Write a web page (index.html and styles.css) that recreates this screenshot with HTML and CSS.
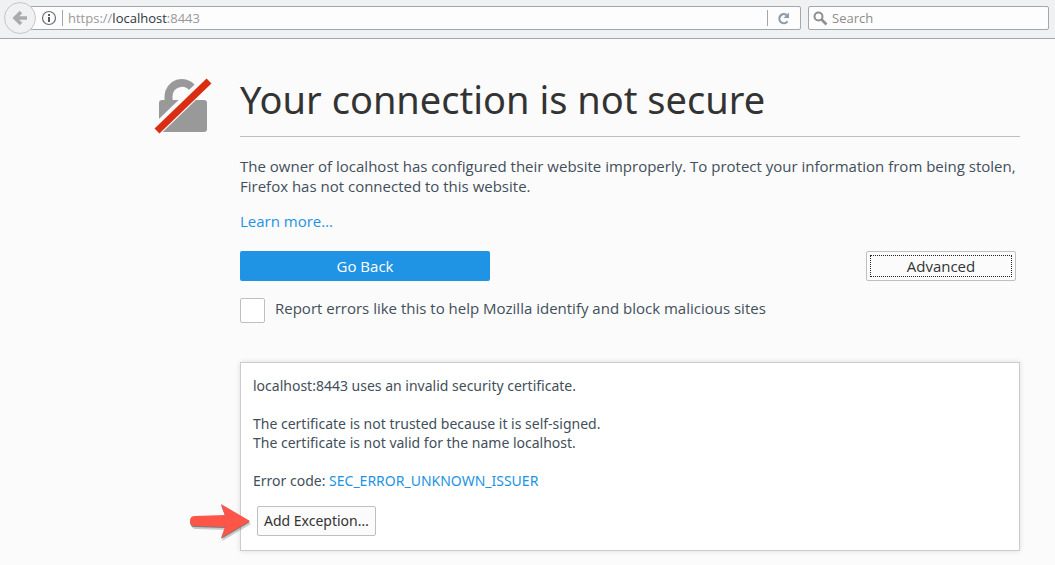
FILE: index.html
```html
<!DOCTYPE html>
<html lang="en">
<head>
<meta charset="utf-8">
<title>Insecure Connection</title>
<link rel="stylesheet" href="styles.css">
</head>
<body>
<header class="toolbar">
  <button class="back" aria-label="Back">
    <svg width="16" height="16" viewBox="0 0 16 16"><path d="M9 2 3 8l6 6M3.500 8H15" fill="none" stroke="#ababab" stroke-width="3.600"/></svg>
  </button>
  <div class="urlbar">
    <svg class="info" width="16" height="16" viewBox="0 0 16 16"><circle cx="8" cy="8" r="6.500" fill="none" stroke="#6e6e6e" stroke-width="1.200"/><path d="M7 7h2v5H7zM7 4h2v2H7z" fill="#5a5a5a"/></svg>
    <div class="address">https://<span class="host">localhost</span>:8443</div>
    <button class="reload" aria-label="Reload">
      <svg width="14" height="14" viewBox="0 0 14 14"><path d="M10.500 10.300A4.500 4.500 0 1 1 9.500 4" fill="none" stroke="#8d9bab" stroke-width="2.200"/><path d="M12 1.500v5.500H6.500z" fill="#8d9bab"/></svg>
    </button>
  </div>
  <div class="searchbar">
    <svg width="15" height="15" viewBox="0 0 15 15"><circle cx="5.500" cy="5.500" r="4" fill="none" stroke="#8f8f8f" stroke-width="2"/><path d="m8.500 8.500 5 5" stroke="#8f8f8f" stroke-width="2.600"/></svg>
    <input class="search" type="text" placeholder="Search" aria-label="Search">
  </div>
</header>
<main class="page">
  <svg class="lock" width="58" height="58" viewBox="0 0 58 58">
    <path d="M14.500 26V18a13.500 13.500 0 0 1 24-8" fill="none" stroke="#999" stroke-width="8"/>
    <rect x="5" y="22" width="48" height="32" rx="3" fill="#999"/>
    <path d="M-1 55 56 0" stroke="#fbfbfb" stroke-width="12"/>
    <path d="m3 53 52-50" stroke="#d92d14" stroke-width="7"/>
  </svg>
  <div class="content">
    <h1 class="title">Your connection is not secure</h1>
    <p class="text">The owner of localhost has configured their website improperly. To protect your information from being stolen, Firefox has not connected to this website.</p>
    <p class="more"><a href="#">Learn more…</a></p>
    <div class="actions">
      <button class="btn primary">Go Back</button>
      <button class="btn advanced">Advanced</button>
    </div>
    <div class="report">
      <input class="check" type="checkbox" id="report">
      <label for="report">Report errors like this to help Mozilla identify and block malicious sites</label>
    </div>
    <section class="panel">
      <p>localhost:8443 uses an invalid security certificate.</p>
      <p>The certificate is not trusted because it is self-signed.<br>The certificate is not valid for the name localhost.</p>
      <p>Error code: <a href="#">SEC_ERROR_UNKNOWN_ISSUER</a></p>
      <button class="btn exception">Add Exception…</button>
      <svg class="arrow" width="64" height="42" viewBox="0 0 64 42">
        <path d="M6 13 36 12 32 1 61 18 32 35 36 24 6 23Q1 23 1 18T6 13Z" fill="#555" opacity=".3" transform="translate(1 3)"/>
        <path d="M6 13 36 12 32 1 61 18 32 35 36 24 6 23Q1 23 1 18T6 13Z" fill="#666" opacity=".8" transform="translate(0 1)"/>
        <path d="M6 13 36 12 32 1 61 18 32 35 36 24 6 23Q1 23 1 18T6 13Z" fill="#fd5548"/>
      </svg>
    </section>
  </div>
</main>
</body>
</html>
```
FILE: styles.css
```css
* { box-sizing: border-box; }
body {
  margin: 0;
  background: #fbfbfb;
  color: #424f5a;
  font: 15px/20px "Open Sans", "Noto Sans", sans-serif;
}
h1, p { margin: 0; }
a { color: #1d93e3; text-decoration: none; }
button, input { font: inherit; margin: 0; padding: 0; }
svg { display: block; flex: none; }

.toolbar {
  display: flex;
  align-items: center;
  padding: 2px 6px 4px 4px;
  border-bottom: 1px solid #a0a8ae;
  background: #f0f1f3;
  font-size: 13px;
}
.back {
  display: flex;
  align-items: center;
  justify-content: center;
  flex: none;
  width: 32px;
  height: 32px;
  border: 1px solid #c4c6c8;
  border-radius: 50%;
  background: #f0f1f3;
  z-index: 1;
}
.urlbar, .searchbar {
  display: flex;
  align-items: center;
  height: 24px;
  border: 1px solid #a0a8ae;
  border-radius: 2px;
  background: #fdfdfd;
}
.urlbar {
  flex: 1;
  margin-left: -6px;
  padding-left: 10px;
}
.address {
  flex: 1;
  height: 16px;
  margin-left: 5px;
  padding-left: 5px;
  border-left: 1px solid #a0a8ae;
  line-height: 16px;
  color: #999;
}
.host { color: #2e3640; }
.reload {
  display: flex;
  align-items: center;
  height: 16px;
  padding: 0 9px;
  border: 0;
  border-left: 1px solid #a0a8ae;
  background: none;
}
.searchbar {
  width: 241px;
  margin-left: 7px;
  padding-left: 4px;
}
.search {
  flex: 1;
  min-width: 0;
  height: 20px;
  margin-left: 4px;
  border: 0;
  background: none;
  color: #2e3640;
}
.search::placeholder { color: #8c8c8c; }

.page {
  display: flex;
  align-items: flex-start;
  padding: 33px 35px 14px 154px;
}
.lock { margin: 6px 28px 0 0; }
.content { flex: 1; min-width: 0; }
.title {
  padding-bottom: 10px;
  border-bottom: 1px solid #bfbfbf;
  color: #333;
  font-family: "Noto Sans", sans-serif;
  font-size: 38px;
  font-weight: 400;
  line-height: 54px;
}
.text { margin-top: 19px; }
.more { margin-top: 15px; }
.actions {
  display: flex;
  justify-content: space-between;
  margin-top: 20px;
  padding-right: 4px;
}
.btn {
  height: 30px;
  border: 1px solid #bfbfbf;
  border-radius: 2px;
  background: #fbfbfb;
  color: #333;
}
.primary {
  width: 250px;
  border: 0;
  background: #1f93e4;
  color: #fff;
}
.advanced {
  width: 150px;
  outline: 1px dotted #222;
  outline-offset: -5px;
}
.report {
  display: flex;
  gap: 10px;
  margin-top: 17px;
}
.check {
  appearance: none;
  width: 25px;
  height: 25px;
  border: 1px solid #bfbfbf;
  border-radius: 2px;
  background: #fff;
}
.panel {
  position: relative;
  margin-top: 39px;
  padding: 13px 12px 14px;
  border: 1px solid #ccc;
  background: #fff;
  box-shadow: 0 0 5px #ddd;
  font-family: "Noto Sans", sans-serif;
  font-size: 14px;
  line-height: 19px;
}
.panel p + p { margin-top: 19px; }
.exception {
  display: block;
  margin: 16px 0 0 4px;
  padding: 0 6px 2px;
}
.arrow {
  position: absolute;
  left: -52px;
  bottom: 5px;
}
```
